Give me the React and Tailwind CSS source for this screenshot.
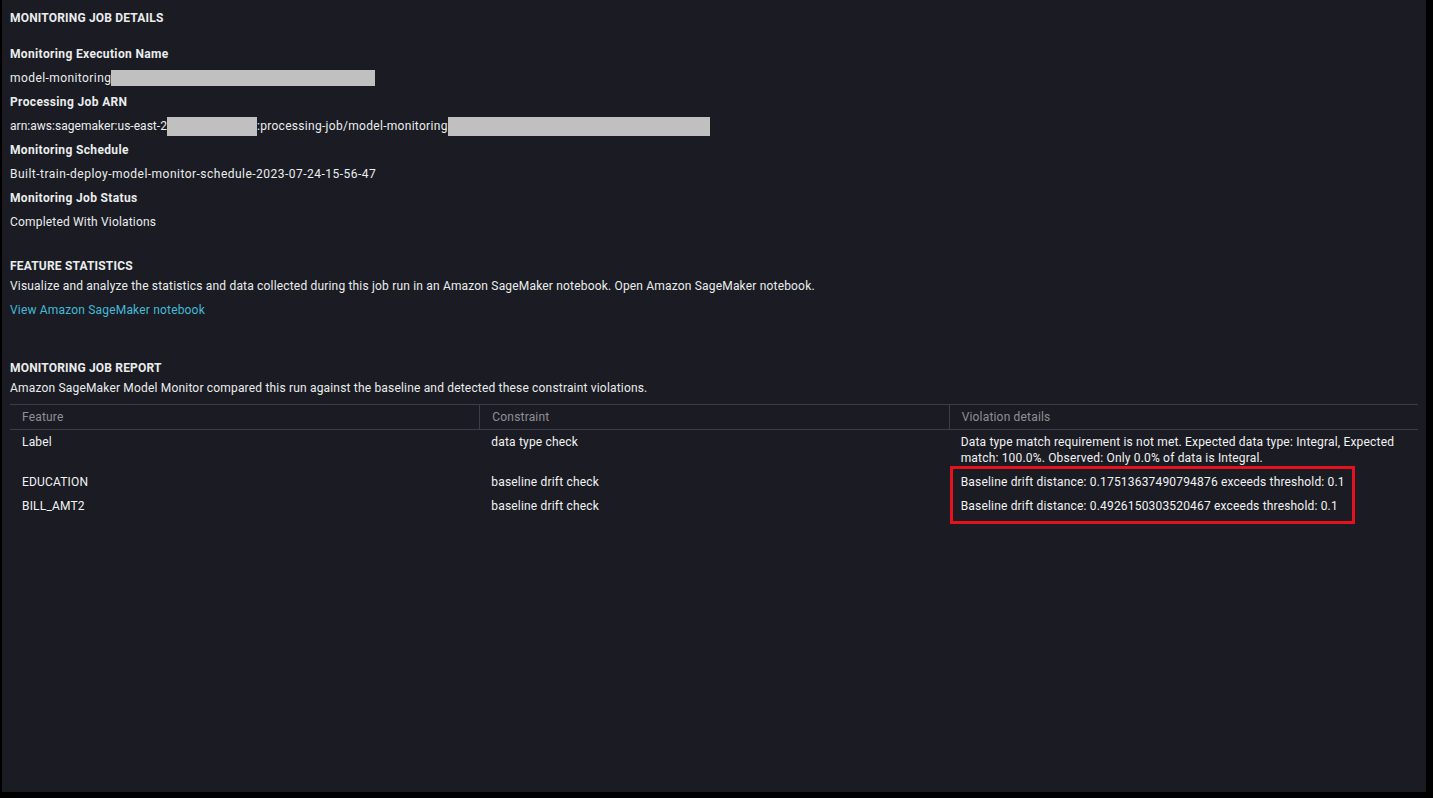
import React from 'react';

const rows = [
  {
    feature: 'Label',
    constraint: 'data type check',
    details:
      'Data type match requirement is not met. Expected data type: Integral, Expected match: 100.0%. Observed: Only 0.0% of data is Integral.',
  },
  {
    feature: 'EDUCATION',
    constraint: 'baseline drift check',
    details: 'Baseline drift distance: 0.17513637490794876 exceeds threshold: 0.1',
  },
  {
    feature: 'BILL_AMT2',
    constraint: 'baseline drift check',
    details: 'Baseline drift distance: 0.4926150303520467 exceeds threshold: 0.1',
  },
];

function Redacted({ width, className = '' }) {
  return <span className={`inline-block bg-[#c0c0c0] align-middle ${className}`} style={{ width }} />;
}

function Field({ label, children }) {
  return (
    <>
      <div className="font-bold leading-[24px] tracking-[0.36px]">{label}</div>
      <div className="leading-[24px] flex items-center">{children}</div>
    </>
  );
}

export default function App() {
  return (
    <div className="h-screen w-full bg-black overflow-hidden">
      <div
        className="ml-[2px] w-[1424px] h-[792px] bg-[#1b1c23] text-[#eaeded] text-[12px] tracking-[0.18px] px-[8px] pt-[6px]"
        style={{ fontFamily: 'Roboto, "Liberation Sans", sans-serif' }}
      >
        {/* Job details */}
        <div className="font-bold leading-[24px] mb-[12px]">MONITORING JOB DETAILS</div>
        <Field label="Monitoring Execution Name">
          <span className="tracking-[0.42px]">model-monitoring</span>
          <Redacted width={264} className="h-[16px]" />
        </Field>
        <Field label="Processing Job ARN">
          <span className="tracking-[0.03px]">arn:aws:sagemaker:us-east-2</span>
          <Redacted width={90} className="h-[19px]" />
          <span className="tracking-[0.3px]">:processing-job/model-monitoring</span>
          <Redacted width={262} className="h-[19px]" />
        </Field>
        <Field label="Monitoring Schedule">
          <span className="tracking-[0.48px]">Built-train-deploy-model-monitor-schedule-2023-07-24-15-56-47</span>
        </Field>
        <Field label="Monitoring Job Status">Completed With Violations</Field>

        {/* Feature statistics */}
        <div className="mt-[22px] font-bold leading-[20px]">FEATURE STATISTICS</div>
        <div className="leading-[20px]">
          Visualize and analyze the statistics and data collected during this job run in an Amazon SageMaker notebook. Open
          Amazon SageMaker notebook.
        </div>
        <div className="mt-[4px] leading-[20px]">
          <a href="#" className="text-[#44b9d6]">
            View Amazon SageMaker notebook
          </a>
        </div>

        {/* Report */}
        <div className="mt-[38px] font-bold leading-[20px]">MONITORING JOB REPORT</div>
        <div className="leading-[20px]">
          Amazon SageMaker Model Monitor compared this run against the baseline and detected these constraint violations.
        </div>

        <div className="relative mt-[6px] w-[1408px]">
          <div className="grid grid-cols-3 border-y border-[#3b3e47] h-[26px] items-center text-[#8d9096]">
            <div className="px-[12px]">Feature</div>
            <div className="px-[12px] border-l border-[#3b3e47] h-full flex items-center">Constraint</div>
            <div className="px-[12px] border-l border-[#3b3e47] h-full flex items-center">Violation details</div>
          </div>
          {rows.map((r) => (
            <div key={r.feature} className="grid grid-cols-3 py-[4px] leading-[16px] text-[#f2f3f3]">
              <div className="px-[12px]">{r.feature}</div>
              <div className="px-[12px]">{r.constraint}</div>
              <div className="px-[12px] pr-[20px]">{r.details}</div>
            </div>
          ))}
          {/* highlight annotation */}
          <div className="absolute left-[940px] top-[62px] w-[405px] h-[58px] border-[3px] border-[#e5121d]" />
        </div>
      </div>
    </div>
  );
}
